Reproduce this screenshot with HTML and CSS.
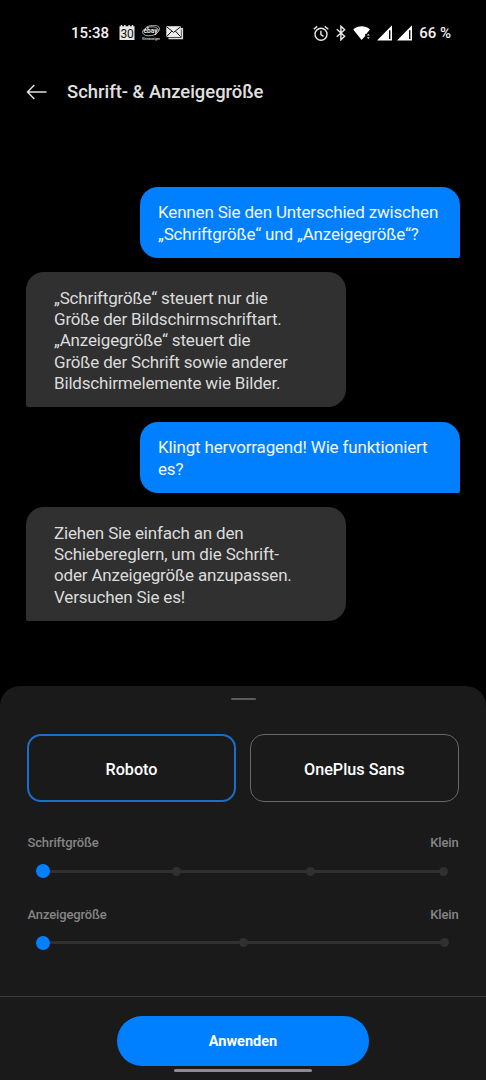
FILE: index.html
```html
<!DOCTYPE html>
<html lang="de">
<head>
    <meta charset="UTF-8">
    <meta name="viewport" content="width=device-width, initial-scale=1.0">
    <title>Schrift- &amp; Anzeigegröße</title>
    <link rel="stylesheet" href="styles.css">
</head>
<body>
    <div class="screen">
        <div class="status-bar">
            <span class="clock">15:38</span>
            <svg class="icon-calendar" width="16" height="16" viewBox="0 0 16 16">
                <path d="M.5 1.2h1.3V0h1.4v1.2h2V0h1.4v1.2h2.8V0h1.4v1.2h2V0h1.4v1.2h1.3V15H.5z" fill="#e8e8e8"/>
                <text class="calendar-day" x="8" y="12.6" text-anchor="middle">30</text>
            </svg>
            <svg class="icon-ebay" width="18" height="16" viewBox="0 0 18 16">
                <g fill="none" stroke="#ccc" stroke-width="0.8">
                    <ellipse cx="8.5" cy="6.3" rx="8" ry="4.4" transform="rotate(-9 8.5 6.3)"/>
                    <path d="M3.5 3C6 .2 14.5-.8 16.9 2.1c1 1.3.8 3-.7 4.7"/>
                </g>
                <text class="ebay-name" x="8.5" y="8.2" text-anchor="middle">ebay</text>
                <text class="ebay-sub" x="9" y="14.6" text-anchor="middle">Kleinanzeigen</text>
            </svg>
            <svg class="icon-mail" width="18" height="16" viewBox="0 0 18 16">
                <path d="M2.5 13.5h13.8V3.8H15" fill="none" stroke="#ddd" stroke-width="1.6"/>
                <path d="M.3 1.2h14.6v10.9H.3z" fill="#eee"/>
                <path d="M.6 1.8l7 5.6 7-5.6M.6 11.7l5.2-5.6M14.6 11.7L9.4 6.1" fill="none" stroke="#111" stroke-width="1"/>
            </svg>
            <div class="status-right">
                <svg width="16" height="17" viewBox="0 0 16 17">
                    <g fill="none" stroke="#e8e8e8" stroke-width="1.4">
                        <circle cx="8" cy="9.3" r="6"/>
                        <path d="M7.9 5.8v3.9l2.6 1.6M.7 4.3L4.2 1.4M15.3 4.3l-3.5-2.9"/>
                    </g>
                </svg>
                <svg class="icon-bluetooth" width="10" height="16" viewBox="0 0 10 16">
                    <path d="M.8 4.2l7.8 7L4.9 14.8V1.2l3.7 3.6-7.8 7" fill="none" stroke="#eee" stroke-width="1.4"/>
                </svg>
                <svg class="icon-wifi" width="18" height="16" viewBox="0 0 18 16">
                    <path d="M.2 4.5C4.9.1 12.3.1 17 4.5L13.2 9h-1v2.1L8.6 15z" fill="#fff"/>
                    <path d="M13.8 10.6l1.5-1.8 1.5 1.8zM13.8 12.3l1.5 1.8 1.5-1.8z" fill="#ddd"/>
                </svg>
                <svg class="icon-signal" width="15" height="16" viewBox="0 0 15 16">
                    <path d="M0 15.5L15 .2v15.3zM12 5.2V14h1.4V5.2z" fill="#fff" fill-rule="evenodd"/>
                </svg>
                <svg class="icon-signal" width="15" height="16" viewBox="0 0 15 16">
                    <path d="M0 15.5L15 .2v15.3zM12 5.2V14h1.4V5.2z" fill="#fff" fill-rule="evenodd"/>
                </svg>
                <span class="battery">66 %</span>
            </div>
        </div>

        <div class="header">
            <svg class="back" width="22" height="16" viewBox="0 0 22 16">
                <path d="M20.5 8H1.5M8.3 1L1.5 8l6.8 7" fill="none" stroke="#e0e0e0" stroke-width="1.5"/>
            </svg>
            <h1>Schrift- &amp; Anzeigegröße</h1>
        </div>

        <div class="chat">
            <div class="bubble question">Kennen Sie den Unterschied zwischen<br>„Schriftgröße“ und „Anzeigegröße“?</div>
            <div class="bubble answer">„Schriftgröße“ steuert nur die<br>Größe der Bildschirmschriftart.<br>„Anzeigegröße“ steuert die<br>Größe der Schrift sowie anderer<br>Bildschirmelemente wie Bilder.</div>
            <div class="bubble question">Klingt hervorragend! Wie funktioniert<br>es?</div>
            <div class="bubble answer">Ziehen Sie einfach an den<br>Schiebereglern, um die Schrift-<br>oder Anzeigegröße anzupassen.<br>Versuchen Sie es!</div>
        </div>

        <div class="sheet">
            <div class="handle"></div>
            <div class="fonts">
                <button class="font-option selected">Roboto</button>
                <button class="font-option">OnePlus Sans</button>
            </div>

            <div class="setting">
                <div class="labels"><span>Schriftgröße</span><span>Klein</span></div>
                <div class="slider">
                    <span class="thumb"></span>
                    <span class="stop"></span>
                    <span class="stop"></span>
                    <span class="stop"></span>
                </div>
            </div>

            <div class="setting">
                <div class="labels"><span>Anzeigegröße</span><span>Klein</span></div>
                <div class="slider">
                    <span class="thumb"></span>
                    <span class="stop"></span>
                    <span class="stop"></span>
                </div>
            </div>

            <div class="footer">
                <button class="apply">Anwenden</button>
                <div class="nav-bar"></div>
            </div>
        </div>
    </div>
</body>
</html>
```
FILE: styles.css
```css
* {
    box-sizing: border-box;
}
body {
    margin: 0;
    background-color: #000;
    font-family: Roboto, sans-serif;
    color: #e0e0e0;
}
.screen {
    display: flex;
    flex-direction: column;
    width: 486px;
    height: 1080px;
    overflow: hidden;
    background-color: #000;
}
svg {
    display: block;
    flex: none;
}
button {
    font-family: inherit;
    padding: 0;
    border: none;
    color: #fff;
    cursor: pointer;
}
.status-bar {
    display: flex;
    align-items: center;
    height: 66px;
    padding: 0 35px 0 71px;
    font-size: 15px;
    font-weight: 500;
    color: #f2f2f2;
}
.clock {
    width: 48px;
    white-space: nowrap;
}
.icon-ebay {
    margin-left: 7px;
}
.icon-mail {
    margin-left: 6px;
}
.calendar-day {
    font-size: 12px;
    font-weight: 400;
    letter-spacing: -0.3px;
    fill: #111;
}
.ebay-name {
    font-size: 6.5px;
    font-weight: 700;
    fill: #eee;
}
.ebay-sub {
    font-size: 2.8px;
    font-weight: 700;
    fill: #ccc;
}
.status-right {
    display: flex;
    align-items: center;
    margin-left: auto;
}
.icon-bluetooth {
    margin-left: 7px;
}
.icon-wifi {
    margin-left: 7px;
}
.icon-signal {
    margin-left: 4.5px;
}
.icon-wifi + .icon-signal {
    margin-left: 6px;
}
.battery {
    margin-left: 7.5px;
    white-space: nowrap;
}
.header {
    display: flex;
    align-items: center;
    height: 52px;
    padding-left: 26px;
}
h1 {
    margin: 0 0 2px 19px;
    font-size: 18.4px;
    font-weight: 500;
    white-space: nowrap;
}
.chat {
    display: flex;
    flex-direction: column;
    gap: 14.4px;
    height: 568px;
    padding: 68.7px 26px 0;
}
.bubble {
    width: 320px;
    padding: 15.7px 18px 12.8px;
    font-size: 17px;
    line-height: 21.3px;
    letter-spacing: -0.17px;
    white-space: nowrap;
}
.question {
    align-self: flex-end;
    border-radius: 18px 18px 2px 18px;
    background-color: #007fff;
    color: #f0f7ff;
}
.answer {
    padding-left: 28px;
    border-radius: 18px 18px 18px 2px;
    background-color: #303030;
    color: #dcdcdc;
}
.sheet {
    display: flex;
    flex-direction: column;
    height: 394px;
    border-radius: 20px 20px 0 0;
    background-color: #1a1a1a;
}
.handle {
    width: 25px;
    height: 2px;
    margin: 12px auto 0;
    border-radius: 1px;
    background-color: #5c5c5c;
}
.fonts {
    display: grid;
    grid-template-columns: 1fr 1fr;
    gap: 13px;
    padding: 34px 27px 0;
}
.font-option {
    height: 68px;
    padding-top: 2px;
    border: 1px solid #666;
    border-radius: 14px;
    background-color: transparent;
    font-size: 16.2px;
    font-weight: 500;
}
.font-option.selected {
    margin-right: 0.5px;
    border: 2px solid #196fc9;
}
.setting {
    height: 71.5px;
    padding: 0 27.5px;
}
.fonts + .setting {
    margin-top: 32px;
}
.labels {
    display: flex;
    justify-content: space-between;
    font-size: 13px;
    font-weight: 500;
    line-height: 18px;
    letter-spacing: -0.15px;
    color: #858585;
}
.slider {
    display: flex;
    align-items: center;
    justify-content: space-between;
    height: 14px;
    margin: 12px 10px 0 8.5px;
    background: linear-gradient(#303030, #303030) center / calc(100% - 8px) 3px no-repeat;
}
/* pulled in so the steps stay evenly spaced */
.thumb {
    width: 14px;
    height: 14px;
    margin-right: -5px;
    border-radius: 50%;
    background-color: #007fff;
}
.thumb + .stop {
    margin-left: 2.5px;
}
.stop {
    width: 9px;
    height: 9px;
    border-radius: 50%;
    background-color: #303030;
}
.footer {
    display: flex;
    flex-direction: column;
    align-items: center;
    height: 84px;
    margin-top: auto;
    padding-top: 19px;
    border-top: 1px solid #3c3c3c;
}
.apply {
    width: 252px;
    height: 50px;
    padding-top: 1px;
    border-radius: 25px;
    background-color: #007fff;
    font-size: 14.5px;
    font-weight: 700;
}
.nav-bar {
    width: 138px;
    height: 3px;
    margin-top: 3px;
    border-radius: 1.5px;
    background-color: #8c8c8c;
}
```
